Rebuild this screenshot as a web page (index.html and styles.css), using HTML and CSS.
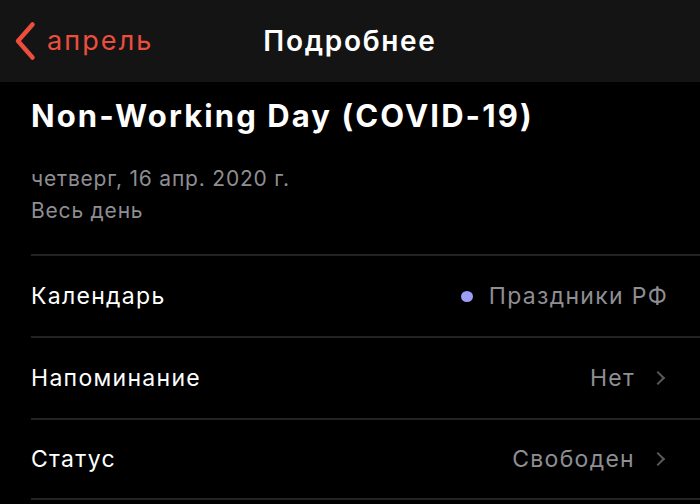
FILE: index.html
```html
<!DOCTYPE html>
<html lang="ru">
<head>
    <meta charset="UTF-8">
    <meta name="viewport" content="width=device-width, initial-scale=1.0">
    <title>Подробнее</title>
    <link rel="stylesheet" href="styles.css">
</head>
<body>
    <div class="navbar">
        <a class="back" href="#">
            <svg class="back-icon" width="22" height="40" viewBox="0 0 22 40">
                <path d="M18.5 3.5 L4 20 L18.5 36.5" fill="none" stroke="currentColor" stroke-width="4.5" stroke-linecap="round" stroke-linejoin="round"/>
            </svg>
            <span>апрель</span>
        </a>
        <div class="nav-title">Подробнее</div>
    </div>

    <div class="content">
        <div class="event-header">
            <h1>Non-Working Day (COVID-19)</h1>
            <p class="event-date">четверг, 16 апр. 2020 г.</p>
            <p class="event-time">Весь день</p>
        </div>

        <div class="rows">
            <div class="row">
                <span class="row-label">Календарь</span>
                <span class="row-value"><span class="dot"></span>Праздники РФ</span>
            </div>
            <div class="row">
                <span class="row-label">Напоминание</span>
                <span class="row-value">Нет<span class="chevron"></span></span>
            </div>
            <div class="row">
                <span class="row-label">Статус</span>
                <span class="row-value">Свободен<span class="chevron"></span></span>
            </div>
        </div>
    </div>
</body>
</html>
```

FILE: styles.css
```css
* {
    margin: 0;
    padding: 0;
    box-sizing: border-box;
}

body {
    font-family: Inter, 'Noto Sans', sans-serif;
    background: #000;
    color: #fff;
    width: 700px;
    height: 504px;
    overflow: hidden;
}

.navbar {
    height: 82px;
    background: #141414;
    position: relative;
    display: flex;
    align-items: center;
    justify-content: center;
}

.back {
    position: absolute;
    left: 14px;
    top: 21px;
    display: flex;
    align-items: center;
    gap: 11px;
    color: #eb4e3d;
    text-decoration: none;
    font-size: 27px;
    letter-spacing: 2.1px;
}

.back span {
    margin-top: -2px;
}

.back-icon {
    display: block;
}

.nav-title {
    font-size: 28px;
    font-weight: 600;
    letter-spacing: 1.7px;
}

.content {
    padding-left: 31px;
}

.event-header {
    padding: 10px 0 27px;
}

.event-header h1 {
    font-size: 31px;
    font-weight: 700;
    line-height: 48px;
    letter-spacing: 2.1px;
    margin-bottom: 23px;
}

.event-date,
.event-time {
    color: #8e8e93;
    font-size: 21px;
    line-height: 32px;
    letter-spacing: 0.8px;
}

.row {
    height: 82px;
    border-top: 2px solid #222224;
    display: flex;
    align-items: center;
    justify-content: space-between;
    padding-right: 32px;
}

.row:last-child {
    border-bottom: 2px solid #222224;
}

.row-label {
    font-size: 23px;
    letter-spacing: 1.3px;
}

.row-value {
    font-size: 23px;
    letter-spacing: 1.3px;
    color: #8e8e93;
    display: flex;
    align-items: center;
}

.dot {
    width: 12px;
    height: 11px;
    border-radius: 50%;
    background: #9c9ef5;
    margin-right: 16px;
}

.chevron {
    width: 10px;
    height: 10px;
    border-top: 2.5px solid #5a5a5e;
    border-right: 2.5px solid #5a5a5e;
    transform: rotate(45deg);
    margin-left: 18px;
    margin-right: 5px;
}
```
